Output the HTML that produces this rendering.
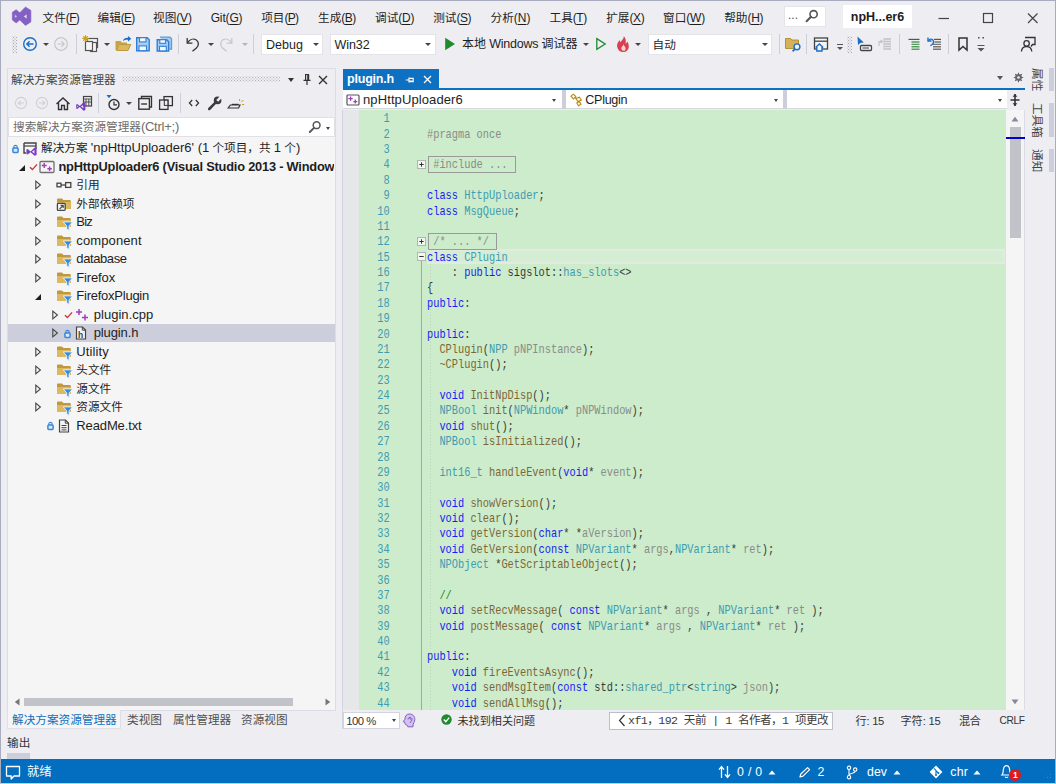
<!DOCTYPE html>
<html lang="zh-CN"><head>
<meta charset="utf-8">
<title>npHttpUploader6 - Microsoft Visual Studio</title>
<style>
*{box-sizing:border-box;margin:0;padding:0}
html,body{width:1056px;height:784px;overflow:hidden;background:#eeeef2}
body{position:relative;font-family:"Liberation Sans","Noto Sans CJK SC",sans-serif;font-size:11.64px;color:#1e1e1e}
.abs{position:absolute}
.l{font-size:13px;letter-spacing:0}
.lb{font-size:12.8px;letter-spacing:0}
.lc{font-size:12.5px}
.pt{line-height:18px;white-space:nowrap}
#frame{position:absolute;left:0;top:0;width:1056px;height:784px;border:1px solid #a9acbf;border-bottom:1.6px solid #c3cfe4;pointer-events:none;z-index:50}
#menu{position:absolute;left:0;top:0;width:1056px;height:32px}
#menu .mi{position:absolute;top:8.5px;height:17px;line-height:17px;color:#1e1e1e;white-space:nowrap}
#menu .mi u{text-decoration:underline;text-underline-offset:1.5px}
#tb{position:absolute;left:0;top:32px;width:1056px;height:26px}
.combo{position:absolute;background:#fff;border:1px solid #e3e3e8;height:21px;line-height:19px;padding-left:4px;color:#1e1e1e;white-space:nowrap}
.dd{position:absolute;width:0;height:0;border-style:solid;border-color:transparent;border-width:3px 3px 0 3px;border-top-color:#444}
.grip{background-image:radial-gradient(circle,#a8a8b6 0.65px,transparent 0.85px),radial-gradient(circle,#a8a8b6 0.65px,transparent 0.85px);background-size:3px 3px;background-position:0 0,1.5px 1.5px}
.grip2{background-image:radial-gradient(circle,#b4b4c0 0.65px,transparent 0.85px),radial-gradient(circle,#b4b4c0 0.65px,transparent 0.85px);background-size:3px 3px;background-position:0 0,1.5px 1.5px}
.sep{position:absolute;width:1px;background:#cccedb}
#se{position:absolute;left:7px;top:68px;width:329px;height:643px;background:#eeeef2;border:1px solid #dcdce7}
.row{position:absolute;height:18px;line-height:18px;white-space:nowrap;color:#1e1e1e}
.code{opacity:.88;font-family:"Liberation Mono","Noto Sans CJK SC",monospace;font-size:12.6px;line-height:15.38px;white-space:pre;color:#1e1e1e}
.cbox{border:1px solid #9a9a9a}
.guide{width:1px;background-image:linear-gradient(#bccdb9 45%,transparent 45%);background-size:1px 3px;opacity:.85}
.bt{line-height:18px;white-space:nowrap;color:#333}
.vt{width:19px;writing-mode:vertical-rl;text-orientation:sideways;line-height:19px;white-space:nowrap;color:#444;text-align:left}
#status{position:absolute;left:0;top:759.3px;width:1056px;height:23.5px;background:#036ec0;color:#fff}
.st{top:3.5px;line-height:18px;white-space:nowrap;color:#fff;font-size:12px}
.st .l,.st{font-size:12.3px}
.bt .l{font-size:11.2px}
.mi .l{font-size:12px}
</style>
</head>
<body>
<div id="menu">
<svg class="abs" style="left:11px;top:6px" width="21" height="21" viewBox="0 0 21 21"><path d="M1.3 6.3 L5.15 3.66 L8.8 6.7 L14.5 1 L19.9 4.4 V15.9 L14.5 19.4 L8.8 14 L5.15 16.9 L1.3 14 Z M3.8 8.6 L6.3 10.4 L3.8 12.1 Z M15.9 7.9 L12.6 10.4 L15.9 12.9 Z" fill="#8560c4" fill-rule="evenodd" stroke="#8560c4" stroke-width=".6" stroke-linejoin="round"></path></svg>
<div class="mi" style="left:42.5px"><span>文件<span class="l" style="letter-spacing: -0.636px;">(<u>F</u>)</span></span></div>
<div class="mi" style="left:97.5px"><span>编辑<span class="l" style="letter-spacing: -0.76px;">(<u>E</u>)</span></span></div>
<div class="mi" style="left:153px"><span>视图<span class="l" style="letter-spacing: -0.177px;">(<u>V</u>)</span></span></div>
<div class="mi" style="left:210.7px"><span><span class="l" style="letter-spacing: -0.156px;">Git(<u>G</u>)</span></span></div>
<div class="mi" style="left:261.2px"><span>项目<span class="l" style="letter-spacing: -0.76px;">(<u>P</u>)</span></span></div>
<div class="mi" style="left:318px"><span>生成<span class="l" style="letter-spacing: -0.51px;">(<u>B</u>)</span></span></div>
<div class="mi" style="left:375px"><span>调试<span class="l" style="letter-spacing: -0.229px;">(<u>D</u>)</span></span></div>
<div class="mi" style="left:433.2px"><span>测试<span class="l" style="letter-spacing: -0.427px;">(<u>S</u>)</span></span></div>
<div class="mi" style="left:490.5px"><span>分析<span class="l" style="letter-spacing: 0.021px;">(<u>N</u>)</span></span></div>
<div class="mi" style="left:549.5px"><span>工具<span class="l" style="letter-spacing: -0.453px;">(<u>T</u>)</span></span></div>
<div class="mi" style="left:606.2px"><span>扩展<span class="l" style="letter-spacing: -0.344px;">(<u>X</u>)</span></span></div>
<div class="mi" style="left:663px"><span>窗口<span class="l" style="letter-spacing: -0.198px;">(<u>W</u>)</span></span></div>
<div class="mi" style="left:724.2px"><span>帮助<span class="l" style="letter-spacing: -0.313px;">(<u>H</u>)</span></span></div>
<div class="abs" style="left:784px;top:6px;width:42px;height:21px;background:#fff;border:1px solid #e3e3e8"></div>
<div class="abs" style="left:788px;top:5px;font-size:12px;line-height:20px;color:#555">...</div>
<svg class="abs" style="left:805px;top:9px" width="14" height="14" viewBox="0 0 14 14"><circle cx="8.6" cy="5.2" r="3.6" fill="none" stroke="#555" stroke-width="1.6"></circle><path d="M6 7.8 L1.6 12.2" stroke="#555" stroke-width="2" stroke-linecap="round"></path></svg>
<div class="abs" style="left:843px;top:5px;width:69px;height:23px;background:#fff;text-align:center;line-height:24px;font-weight:bold;font-size:12.5px;color:#1e1e1e"><span style="letter-spacing: -0.022px;">npH...er6</span></div>
<svg class="abs" style="left:930px;top:4.5px" width="120" height="26" viewBox="0 0 120 26"><path d="M8.5 13.5 H19" stroke="#444" stroke-width="1.2"></path><rect x="53.5" y="8.5" width="9" height="9" fill="none" stroke="#444" stroke-width="1.2"></rect><path d="M98 8.5 L107.5 18 M107.5 8.5 L98 18" stroke="#444" stroke-width="1.2"></path></svg>
</div>
<div id="tb">
<div class="abs grip" style="left:12px;top:4px;width:5px;height:17px"></div>
<svg class="abs" style="left:21.5px;top:4px" width="16" height="16" viewBox="0 0 16 16"><circle cx="8" cy="8" r="6.3" fill="none" stroke="#1b6ec2" stroke-width="1.4"></circle><path d="M11.5 8 H5 M7.6 5.2 L4.8 8 L7.6 10.8" fill="none" stroke="#1b6ec2" stroke-width="1.4"></path></svg>
<div class="dd" style="left:42.7px;top:11px;border-top-color:#444"></div>
<svg class="abs" style="left:53px;top:4px" width="16" height="16" viewBox="0 0 16 16"><circle cx="8" cy="8" r="6.3" fill="none" stroke="#c6c6cc" stroke-width="1.2"></circle><path d="M4.5 8 H11 M8.4 5.2 L11.2 8 L8.4 10.8" fill="none" stroke="#c6c6cc" stroke-width="1.2"></path></svg>
<div class="sep" style="left:75.5px;top:2px;height:20px"></div>
<svg class="abs" style="left:82px;top:3px" width="18" height="18" viewBox="0 0 18 18"><rect x="5.5" y="3.5" width="10" height="9" fill="#f5f5f5" stroke="#555" stroke-width="1.2"></rect><rect x="8.5" y="7.5" width="6" height="9" fill="#f5f5f5" stroke="#555" stroke-width="1.2"></rect><rect x="3.5" y="6.5" width="7" height="9" fill="#f5f5f5" stroke="#555" stroke-width="1.2"></rect><circle cx="3.5" cy="3.5" r="2.4" fill="#e8b830"></circle><path d="M3.5 0 V7 M0 3.5 H7 M1 1 L6 6 M6 1 L1 6" stroke="#c99a1a" stroke-width=".8"></path></svg>
<div class="dd" style="left:104px;top:11px;border-top-color:#444"></div>
<svg class="abs" style="left:113.5px;top:3px" width="18" height="18" viewBox="0 0 18 18"><path d="M1.5 6 H6.5 L8 7.5 H13 V9 H5 L2.5 15 H1.5 Z" fill="#c9a342"></path><path d="M2.5 15.5 L5.3 9.5 H16.8 L14 15.5 Z" fill="#dcb85a" stroke="#b08b2b" stroke-width=".8"></path><path d="M9 6.2 C9.5 3.5 11.5 2.6 14 2.8 V1 L17.3 3.8 L14 6.6 V4.8 C12 4.6 10.4 5 9 6.2Z" fill="#1b6ec2"></path></svg>
<svg class="abs" style="left:134px;top:3px" width="18" height="18" viewBox="0 0 18 18"><path d="M2.7 2.7 h10.5 l2 2 v11 h-12.5 z" fill="#a9cdf2" stroke="#2f7fd6" stroke-width="1.4"></path><rect x="5.5" y="2.7" width="6.5" height="4.2" fill="#f4f9ff" stroke="#2f7fd6" stroke-width="1.1"></rect><rect x="5" y="10.9" width="7.5" height="4.8" fill="#f4f9ff" stroke="#2f7fd6" stroke-width="1.1"></rect></svg>
<svg class="abs" style="left:155px;top:3px" width="18" height="18" viewBox="0 0 18 18"><path d="M5 2.2 h10 l1.5 1.5 v10.5 h-2" fill="#a9cdf2" stroke="#5b9bd8" stroke-width="1.3"></path><path d="M2.2 4.7 h9.5 l2 2 v9.3 h-11.5 z" fill="#a9cdf2" stroke="#2f7fd6" stroke-width="1.4"></path><rect x="4.8" y="4.7" width="5.8" height="3.6" fill="#f4f9ff" stroke="#2f7fd6" stroke-width="1.1"></rect><rect x="4.5" y="11.3" width="6.8" height="4.6" fill="#f4f9ff" stroke="#2f7fd6" stroke-width="1.1"></rect></svg>
<div class="sep" style="left:178px;top:2px;height:20px"></div>
<svg class="abs" style="left:183.5px;top:3px" width="18" height="18" viewBox="0 0 18 18"><path d="M3.2 3 V8.2 H8.4" fill="none" stroke="#333" stroke-width="1.3"></path><path d="M3.6 7.8 C5.5 4.6 9 3.2 12 4.8 C15.2 6.6 15 10.8 12.4 13 L8.5 16.2" fill="none" stroke="#333" stroke-width="1.3"></path></svg>
<div class="dd" style="left:208px;top:11px;border-top-color:#444"></div>
<svg class="abs" style="left:217px;top:3px" width="18" height="18" viewBox="0 0 18 18"><path d="M14.8 3 V8.2 H9.6" fill="none" stroke="#c6c6cc" stroke-width="1.3"></path><path d="M14.4 7.8 C12.5 4.6 9 3.2 6 4.8 C2.8 6.6 3 10.8 5.6 13 L9.5 16.2" fill="none" stroke="#c6c6cc" stroke-width="1.3"></path></svg>
<div class="dd" style="left:241.5px;top:11px;border-top-color:#b4b4bc"></div>
<div class="sep" style="left:253px;top:2px;height:20px"></div>
<div class="combo" style="left:261px;top:2px;width:62px"><span><span class="lc" style="letter-spacing: 0.031px;">Debug</span></span></div>
<div class="dd" style="left:313px;top:11px;border-top-color:#444"></div>
<div class="combo" style="left:329.5px;top:2px;width:106px"><span><span class="lc" style="letter-spacing: -0.087px;">Win32</span></span></div>
<div class="dd" style="left:425px;top:11px;border-top-color:#444"></div>
<svg class="abs" style="left:444px;top:5px" width="12" height="14" viewBox="0 0 12 14"><path d="M1.2 0.8 L11 7 L1.2 13.2 Z" fill="#1f8a2e"></path></svg>
<div class="abs" style="left:462px;top:2px;line-height:20px;font-size:12px;white-space:nowrap"><span>本地 <span class="lc" style="letter-spacing: -0.272px;">Windows</span> 调试器</span></div>
<div class="dd" style="left:582.5px;top:11px;border-top-color:#444"></div>
<svg class="abs" style="left:594.5px;top:5px" width="12" height="14" viewBox="0 0 12 14"><path d="M1.8 1.6 L10.2 7 L1.8 12.4 Z" fill="none" stroke="#1f8a2e" stroke-width="1.3"></path></svg>
<svg class="abs" style="left:615px;top:3px" width="16" height="18" viewBox="0 0 16 18"><path d="M8.6 1 C9.4 3.4 6.6 5 5.6 7.2 C5 6.6 4.8 5.8 5 5 C2.8 6.8 1.6 9.4 2.2 12 C2.8 15 5.2 17 8 17 C11.2 17 13.8 14.6 13.8 11.4 C13.8 9.4 13 7.8 12.6 6.4 C12 7.6 11.4 8 10.6 8.4 C11.2 5.6 10.6 2.6 8.6 1 Z" fill="#d9414e"></path><path d="M8.2 9 C8.8 10.6 6.2 11.6 6.4 13.6 C6.5 15 7.4 15.8 8.4 15.8 C9.8 15.8 10.8 14.8 10.6 13.2 C10.4 11.8 9 10.6 8.2 9 Z" fill="#f7d6d8"></path></svg>
<div class="dd" style="left:635px;top:11px;border-top-color:#444"></div>
<div class="combo" style="left:647.5px;top:2px;width:124px">自动</div>
<div class="dd" style="left:761.8px;top:11px;border-top-color:#444"></div>
<div class="sep" style="left:779px;top:2px;height:20px"></div>
<svg class="abs" style="left:784px;top:3px" width="18" height="18" viewBox="0 0 18 18"><path d="M1.5 3.5 H6.5 L8 5 H14.5 V13.5 H1.5 Z" fill="#d5b15a" stroke="#b08b2b" stroke-width=".9"></path><circle cx="13" cy="11.8" r="2.9" fill="#eef4fb" stroke="#1b6ec2" stroke-width="1.4"></circle><path d="M11 13.8 L8.6 16.4" stroke="#1b6ec2" stroke-width="1.7"></path></svg>
<div class="sep" style="left:806px;top:2px;height:20px"></div>
<svg class="abs" style="left:812px;top:3px" width="18" height="18" viewBox="0 0 18 18"><rect x="2.5" y="3" width="13" height="11" fill="#f5f5f5" stroke="#444" stroke-width="1.3"></rect><path d="M2.5 6.2 H15.5" stroke="#444" stroke-width="1.3"></path><path d="M3.6 12.4 L7.4 9 L11.2 12.4 M4.8 12 V16 H10 V12" fill="#f5f5f5" stroke="#1b6ec2" stroke-width="1.4"></path></svg>
<svg class="abs" style="left:836px;top:11px" width="8" height="8" viewBox="0 0 8 8"><path d="M1 1.5 H7" stroke="#555" stroke-width="1"></path><path d="M1 4 H7 L4 7 Z" fill="#555"></path></svg>
<div class="abs grip" style="left:846.5px;top:4px;width:5px;height:17px"></div>
<svg class="abs" style="left:854.7px;top:3px" width="18" height="18" viewBox="0 0 18 18"><path d="M2.5 1.5 L3 10 L5.4 8 L8.8 7.6 Z" fill="#1b6ec2"></path><rect x="5.5" y="10.5" width="11" height="5" rx="1" fill="#f5f5f5" stroke="#444" stroke-width="1.3"></rect><path d="M7.5 13 H14" stroke="#444" stroke-width="1"></path></svg>
<svg class="abs" style="left:877px;top:4px" width="16" height="16" viewBox="0 0 16 16"><path d="M2 10 V5.5 H5 M3.5 3.8 L5.4 5.5 L3.5 7.2" fill="none" stroke="#c0c0c8" stroke-width="1.1"></path><path d="M7.5 3 H14 M7.5 5.5 H14 M7.5 8 H14 M7.5 10.5 H14 M7.5 13 H14" stroke="#c0c0c8" stroke-width="1.3"></path><path d="M7 2 V14" stroke="#c0c0c8"></path></svg>
<div class="sep" style="left:899px;top:2px;height:20px"></div>
<svg class="abs" style="left:905.6px;top:4px" width="16" height="16" viewBox="0 0 16 16"><path d="M2.5 3.4 H13.5" stroke="#555" stroke-width="1.2"></path><path d="M5.5 6 H13.5 M5.5 8.4 H13.5 M5.5 10.8 H13.5 M5.5 13.2 H13.5" stroke="#5b9d63" stroke-width="1.4"></path></svg>
<svg class="abs" style="left:924.8px;top:4px" width="18" height="16" viewBox="0 0 18 16"><path d="M9 3.4 H16" stroke="#555" stroke-width="1.2"></path><path d="M9.5 6 H16 M8 8.4 H16 M8 10.8 H16 M8 13.2 H16" stroke="#777" stroke-width="1.4"></path><path d="M3 1.5 V5 H6.5" fill="none" stroke="#1b6ec2" stroke-width="1.4"></path><path d="M3.4 4.8 C4.5 2.6 7.6 2.6 8.4 5 C9 7 7.4 8.6 5.4 9.6" fill="none" stroke="#1b6ec2" stroke-width="1.4"></path></svg>
<div class="sep" style="left:948px;top:2px;height:20px"></div>
<svg class="abs" style="left:956px;top:4px" width="14" height="16" viewBox="0 0 14 16"><path d="M3 2 H11 V14 L7 10.4 L3 14 Z" fill="none" stroke="#333" stroke-width="1.5"></path></svg>
<svg class="abs" style="left:976.4px;top:3px" width="10" height="18" viewBox="0 0 10 18"><path d="M2 2 h1.6 v1.6 h-1.6z M6.4 2 h1.6 v1.6 h-1.6z" fill="#555"></path><path d="M1.5 10.5 H8.5" stroke="#555" stroke-width="1"></path><path d="M1.5 13 H8.5 L5 16.5 Z" fill="#555"></path></svg>
<svg class="abs" style="left:1018.6px;top:3px" width="18" height="18" viewBox="0 0 18 18"><path d="M6 2.5 H16 V9.5 H13.5 L12 11.5" fill="none" stroke="#333" stroke-width="1.3"></path><circle cx="7.6" cy="8.4" r="2.7" fill="#eeeef2" stroke="#333" stroke-width="1.3"></circle><path d="M2.4 16.5 C2.8 12.6 5 11.6 7.6 11.6 C10.2 11.6 12.4 12.6 12.8 16.5" fill="none" stroke="#333" stroke-width="1.3"></path></svg>
</div>
<div id="se"></div>
<div id="sec">
<div class="abs" style="left:8px;top:137px;width:327px;height:573px;background:#f5f5f5"></div>
<div class="abs pt" style="left:11px;top:71px;color:#444">解决方案资源管理器</div>
<div class="abs grip2" style="left:122px;top:76.3px;width:157.5px;height:6px"></div>
<div class="dd" style="left:288px;top:78px;border-left-width:3.5px;border-right-width:3.5px;border-top-width:4px;border-top-color:#333"></div>
<svg class="abs" style="left:302px;top:73px" width="10" height="13" viewBox="0 0 10 13"><path d="M3 1.5 H7 M3.6 1.5 V7 M6.6 1.5 V7 M5.8 1.5 V7 M1.5 7.3 H8.5 M5 7.5 V12" fill="none" stroke="#333" stroke-width="1.2"></path></svg>
<svg class="abs" style="left:318px;top:74.5px" width="10" height="10" viewBox="0 0 10 10"><path d="M1 1 L9 9 M9 1 L1 9" stroke="#333" stroke-width="1.4"></path></svg>
<svg class="abs" style="left:14px;top:96px" width="14" height="14" viewBox="0 0 14 14"><circle cx="7" cy="7" r="5.6" fill="none" stroke="#cfcfd6" stroke-width="1.1"></circle><path d="M10 7 H4.4 M6.6 4.8 L4.2 7 L6.6 9.2" fill="none" stroke="#cfcfd6" stroke-width="1.1"></path></svg>
<svg class="abs" style="left:35px;top:96px" width="14" height="14" viewBox="0 0 14 14"><circle cx="7" cy="7" r="5.6" fill="none" stroke="#cfcfd6" stroke-width="1.1"></circle><path d="M4 7 H9.6 M7.4 4.8 L9.8 7 L7.4 9.2" fill="none" stroke="#cfcfd6" stroke-width="1.1"></path></svg>
<svg class="abs" style="left:55px;top:95.5px" width="16" height="15" viewBox="0 0 16 15"><path d="M1.5 8 L8 2 L14.5 8 M3.5 6.8 V13.5 H6.6 V9.5 H9.4 V13.5 H12.5 V6.8" fill="none" stroke="#333" stroke-width="1.4"></path></svg>
<svg class="abs" style="left:75px;top:94.5px" width="18" height="17" viewBox="0 0 18 17"><rect x="8.5" y="1.5" width="8" height="9.5" fill="#eeeef2" stroke="#444" stroke-width="1.2"></rect><path d="M8.5 4 H16.5 M11 4 V11 M13.8 4 V11 M8.5 7 H16.5" stroke="#444" stroke-width=".9"></path><path d="M1.2 9.6 L2.2 9 L4.8 11 L8.6 7.2 L10.4 8 V15 L8.6 15.8 L4.8 12 L2.2 14 L1.2 13.4 Z M8.4 9.8 L6 11.5 L8.4 13.2Z M2.3 10.6 V12.4 L3.3 11.5Z" fill="#7a3fc0" fill-rule="evenodd"></path></svg>
<div class="sep" style="left:98px;top:93px;height:20px"></div>
<svg class="abs" style="left:105px;top:94px" width="16" height="18" viewBox="0 0 16 18"><path d="M1.5 1 H6.5 L4 4.2 Z" fill="#1b6ec2"></path><circle cx="9" cy="10.5" r="5" fill="none" stroke="#333" stroke-width="1.4"></circle><path d="M9 7.5 V10.8 H12" fill="none" stroke="#333" stroke-width="1.2"></path></svg>
<div class="dd" style="left:126px;top:102px"></div>
<svg class="abs" style="left:137px;top:95px" width="16" height="16" viewBox="0 0 16 16"><path d="M4.5 3 V1.5 H14.5 V12 H13" fill="none" stroke="#333" stroke-width="1.3"></path><rect x="1.8" y="3.6" width="10.6" height="10.6" fill="#eeeef2" stroke="#333" stroke-width="1.4"></rect><path d="M4.2 9 H10" stroke="#333" stroke-width="1.4"></path></svg>
<svg class="abs" style="left:158px;top:95px" width="16" height="16" viewBox="0 0 16 16"><rect x="6" y="1.6" width="8.4" height="9" fill="#eeeef2" stroke="#333" stroke-width="1.3"></rect><rect x="1.6" y="5" width="8.4" height="9.4" fill="#eeeef2" stroke="#333" stroke-width="1.3"></rect><rect x="6.3" y="5.2" width="3.6" height="5.2" fill="#eeeef2" stroke="#333" stroke-width="1"></rect></svg>
<div class="sep" style="left:180px;top:93px;height:20px"></div>
<svg class="abs" style="left:188px;top:98px" width="12" height="10" viewBox="0 0 12 10"><path d="M4.2 2 L1.4 5 L4.2 8 M7.8 2 L10.6 5 L7.8 8" fill="none" stroke="#333" stroke-width="1.2"></path></svg>
<svg class="abs" style="left:207px;top:95px" width="16" height="16" viewBox="0 0 16 16"><path d="M2.2 14 L9 7.2" stroke="#3b3b3b" stroke-width="2.5" stroke-linecap="round"></path><circle cx="10.6" cy="5.4" r="3.8" fill="#3b3b3b"></circle><path d="M10.2 5.8 L14.6 1.4" stroke="#eeeef2" stroke-width="2.6"></path></svg>
<svg class="abs" style="left:227px;top:98px" width="18" height="12" viewBox="0 0 18 12"><path d="M1.2 10 H11.6 L13 7 H3.4 Z" fill="#eeeef2" stroke="#333" stroke-width="1.2"></path><path d="M4.8 6.4 H11.6" stroke="#333" stroke-width="1.2"></path><path d="M14.4 4 L16.4 2 M15 6.6 H17.2 M12.6 3 V1" stroke="#c99a1a" stroke-width="1"></path></svg>
<div class="abs" style="left:8px;top:117.2px;width:327px;height:19.8px;background:#fff;border:1px solid #e0e0e6"></div>
<div class="abs pt" style="left:13px;top:118px;color:#6d6d6d"><span>搜索解决方案资源管理器<span class="l" style="letter-spacing: -0.248px;">(Ctrl+;)</span></span></div>
<svg class="abs" style="left:308px;top:120px" width="14" height="14" viewBox="0 0 14 14"><circle cx="8.6" cy="5.2" r="3.4" fill="none" stroke="#555" stroke-width="1.5"></circle><path d="M6 7.8 L1.8 12" stroke="#555" stroke-width="1.9" stroke-linecap="round"></path></svg>
<div class="dd" style="left:325.5px;top:127px;border-width:3px 2.5px 0 2.5px"></div>
<div class="abs" style="left:8px;top:324px;width:327px;height:18px;background:#cccedb"></div>
<svg class="abs" style="left:10.5px;top:142.5px" width="9" height="11" viewBox="0 0 9 11"><path d="M2.9 5 V3.6 C2.9 2 6.1 2 6.1 3.6 V5" fill="none" stroke="#3a86d6" stroke-width="1.1"></path><rect x="1.9" y="5" width="5.2" height="4.4" rx=".8" fill="#d9e9fa" stroke="#3a86d6" stroke-width="1.5"></rect></svg>
<svg class="abs" style="left:21.5px;top:140.5px" width="16" height="15" viewBox="0 0 16 15"><path d="M2 2 H14 V8" fill="none" stroke="#444" stroke-width="1.4"></path><path d="M2 5 H14" stroke="#444" stroke-width="1.2"></path><path d="M2 2 V12 H4" fill="none" stroke="#444" stroke-width="1.4"></path><path d="M4.4 8.6 L5.6 8 L8.6 10.4 L12.6 6.4 L14.6 7.2 V14 L12.6 14.8 L8.6 11.2 L5.6 13.6 L4.4 13 Z M12.4 9 L10 10.8 L12.4 12.6Z" fill="#7a3fc0" fill-rule="evenodd"></path></svg>
<div class="row" style="left:41px;top:139.4px;"><span>解决方案 <span class="l" style="letter-spacing: 0.005px;">'npHttpUploader6' (1</span> 个项目，共 <span class="l" style="letter-spacing: 0.005px;">1</span> 个<span class="l" style="letter-spacing: 0.005px;">)</span></span></div>
<svg class="abs" style="left:17.5px;top:163.5px" width="8" height="8" viewBox="0 0 8 8"><path d="M7 1 V7 H1 Z" fill="#1e1e1e"></path></svg>
<svg class="abs" style="left:28.5px;top:162.5px" width="9" height="8" viewBox="0 0 9 8"><path d="M1 4.2 L3.4 6.6 L8 1.4" fill="none" stroke="#d13438" stroke-width="1.4"></path></svg>
<svg class="abs" style="left:38.7px;top:159.5px" width="16" height="14" viewBox="0 0 16 14"><rect x="1" y="1.5" width="14" height="11" rx="1" fill="#f5f5f5" stroke="#707070" stroke-width="1.3"></rect><path d="M5.2 3 V8 M2.7 5.5 H7.7 M10.6 6.5 V11 M8.4 8.8 H12.8" stroke="#a33bbf" stroke-width="1.4"></path></svg>
<div class="row" style="left:58.5px;top:157.9px;font-weight:bold;width:275.5px;overflow:hidden"><span><span class="lb" style="letter-spacing: -0.204px;">npHttpUploader6 (Visual Studio 2013 - Window</span></span><span class="lb">s XP)</span></div>
<svg class="abs" style="left:33.7px;top:180px" width="8" height="10" viewBox="0 0 8 10"><path d="M1.8 1.2 L6.4 5 L1.8 8.8 Z" fill="none" stroke="#444" stroke-width="1.1"></path></svg>
<svg class="abs" style="left:55.5px;top:181px" width="16" height="8" viewBox="0 0 16 8"><rect x="1" y="2.2" width="4" height="3.6" fill="none" stroke="#444" stroke-width="1.3"></rect><path d="M5 4 H9.5" stroke="#444" stroke-width="1.3"></path><rect x="9.6" y="1.6" width="5.2" height="4.8" fill="none" stroke="#444" stroke-width="1.3"></rect></svg>
<div class="row" style="left:76.3px;top:176.4px;">引用</div>
<svg class="abs" style="left:33.7px;top:198.5px" width="8" height="10" viewBox="0 0 8 10"><path d="M1.8 1.2 L6.4 5 L1.8 8.8 Z" fill="none" stroke="#444" stroke-width="1.1"></path></svg>
<svg class="abs" style="left:54.5px;top:195px" width="18" height="18" viewBox="0 0 18 18"><path d="M2 4.4 Q2 3.5 2.9 3.5 H7 L8.4 5.1 H14.9 Q15.8 5.1 15.8 6 V13.2 Q15.8 14.1 14.9 14.1 H2.9 Q2 14.1 2 13.2 Z" fill="#bf9840"></path><path d="M2 7 H15.8 V13.2 Q15.8 14.1 14.9 14.1 H2.9 Q2 14.1 2 13.2 Z" fill="#dcb95f"></path><rect x="2.4" y="8.4" width="7.8" height="7" rx=".8" fill="#f5f5f5" stroke="#4a4a4a" stroke-width="1.3"></rect><path d="M4.6 14 L8 10.6 M5.6 10.4 H8.2 V13" fill="none" stroke="#4a4a4a" stroke-width="1.1"></path></svg>
<div class="row" style="left:76.3px;top:194.9px;">外部依赖项</div>
<svg class="abs" style="left:33.7px;top:217px" width="8" height="10" viewBox="0 0 8 10"><path d="M1.8 1.2 L6.4 5 L1.8 8.8 Z" fill="none" stroke="#444" stroke-width="1.1"></path></svg>
<svg class="abs" style="left:54.5px;top:213px" width="18" height="18" viewBox="0 0 18 18"><path d="M2 4.4 Q2 3.5 2.9 3.5 H7 L8.4 5.1 H14.9 Q15.8 5.1 15.8 6 V13.2 Q15.8 14.1 14.9 14.1 H2.9 Q2 14.1 2 13.2 Z" fill="#bf9840"></path><path d="M2 7 H15.8 V13.2 Q15.8 14.1 14.9 14.1 H2.9 Q2 14.1 2 13.2 Z" fill="#dcb95f"></path><path d="M8.3 8.9 H17.5 L14.1 12.9 V17.4 L11.7 15.7 V12.9 Z" fill="#2f8ae0" stroke="#f5f5f5" stroke-width=".9" stroke-linejoin="round"></path></svg>
<div class="row" style="left:76.3px;top:213.4px;"><span><span class="l" style="letter-spacing: -0.788px;">Biz</span></span></div>
<svg class="abs" style="left:33.7px;top:235.5px" width="8" height="10" viewBox="0 0 8 10"><path d="M1.8 1.2 L6.4 5 L1.8 8.8 Z" fill="none" stroke="#444" stroke-width="1.1"></path></svg>
<svg class="abs" style="left:54.5px;top:231.5px" width="18" height="18" viewBox="0 0 18 18"><path d="M2 4.4 Q2 3.5 2.9 3.5 H7 L8.4 5.1 H14.9 Q15.8 5.1 15.8 6 V13.2 Q15.8 14.1 14.9 14.1 H2.9 Q2 14.1 2 13.2 Z" fill="#bf9840"></path><path d="M2 7 H15.8 V13.2 Q15.8 14.1 14.9 14.1 H2.9 Q2 14.1 2 13.2 Z" fill="#dcb95f"></path><path d="M8.3 8.9 H17.5 L14.1 12.9 V17.4 L11.7 15.7 V12.9 Z" fill="#2f8ae0" stroke="#f5f5f5" stroke-width=".9" stroke-linejoin="round"></path></svg>
<div class="row" style="left:76.3px;top:231.9px;"><span><span class="l" style="letter-spacing: 0.119px;">component</span></span></div>
<svg class="abs" style="left:33.7px;top:254px" width="8" height="10" viewBox="0 0 8 10"><path d="M1.8 1.2 L6.4 5 L1.8 8.8 Z" fill="none" stroke="#444" stroke-width="1.1"></path></svg>
<svg class="abs" style="left:54.5px;top:250px" width="18" height="18" viewBox="0 0 18 18"><path d="M2 4.4 Q2 3.5 2.9 3.5 H7 L8.4 5.1 H14.9 Q15.8 5.1 15.8 6 V13.2 Q15.8 14.1 14.9 14.1 H2.9 Q2 14.1 2 13.2 Z" fill="#bf9840"></path><path d="M2 7 H15.8 V13.2 Q15.8 14.1 14.9 14.1 H2.9 Q2 14.1 2 13.2 Z" fill="#dcb95f"></path><path d="M8.3 8.9 H17.5 L14.1 12.9 V17.4 L11.7 15.7 V12.9 Z" fill="#2f8ae0" stroke="#f5f5f5" stroke-width=".9" stroke-linejoin="round"></path></svg>
<div class="row" style="left:76.3px;top:250.4px;"><span><span class="l" style="letter-spacing: -0.4px;">database</span></span></div>
<svg class="abs" style="left:33.7px;top:272.5px" width="8" height="10" viewBox="0 0 8 10"><path d="M1.8 1.2 L6.4 5 L1.8 8.8 Z" fill="none" stroke="#444" stroke-width="1.1"></path></svg>
<svg class="abs" style="left:54.5px;top:268.5px" width="18" height="18" viewBox="0 0 18 18"><path d="M2 4.4 Q2 3.5 2.9 3.5 H7 L8.4 5.1 H14.9 Q15.8 5.1 15.8 6 V13.2 Q15.8 14.1 14.9 14.1 H2.9 Q2 14.1 2 13.2 Z" fill="#bf9840"></path><path d="M2 7 H15.8 V13.2 Q15.8 14.1 14.9 14.1 H2.9 Q2 14.1 2 13.2 Z" fill="#dcb95f"></path><path d="M8.3 8.9 H17.5 L14.1 12.9 V17.4 L11.7 15.7 V12.9 Z" fill="#2f8ae0" stroke="#f5f5f5" stroke-width=".9" stroke-linejoin="round"></path></svg>
<div class="row" style="left:76.3px;top:268.9px;"><span><span class="l" style="letter-spacing: -0.148px;">Firefox</span></span></div>
<svg class="abs" style="left:33.5px;top:293px" width="8" height="8" viewBox="0 0 8 8"><path d="M7 1 V7 H1 Z" fill="#1e1e1e"></path></svg>
<svg class="abs" style="left:54.5px;top:287px" width="18" height="18" viewBox="0 0 18 18"><path d="M2 4.4 Q2 3.5 2.9 3.5 H7 L8.4 5.1 H14.9 Q15.8 5.1 15.8 6 V13.2 Q15.8 14.1 14.9 14.1 H2.9 Q2 14.1 2 13.2 Z" fill="#bf9840"></path><path d="M2 7 H15.8 V13.2 Q15.8 14.1 14.9 14.1 H2.9 Q2 14.1 2 13.2 Z" fill="#dcb95f"></path><path d="M8.3 8.9 H17.5 L14.1 12.9 V17.4 L11.7 15.7 V12.9 Z" fill="#2f8ae0" stroke="#f5f5f5" stroke-width=".9" stroke-linejoin="round"></path></svg>
<div class="row" style="left:76.3px;top:287.4px;"><span><span class="l" style="letter-spacing: -0.244px;">FirefoxPlugin</span></span></div>
<svg class="abs" style="left:51px;top:309.5px" width="8" height="10" viewBox="0 0 8 10"><path d="M1.8 1.2 L6.4 5 L1.8 8.8 Z" fill="none" stroke="#444" stroke-width="1.1"></path></svg>
<svg class="abs" style="left:63.5px;top:310.5px" width="9" height="8" viewBox="0 0 9 8"><path d="M1 4.2 L3.4 6.6 L8 1.4" fill="none" stroke="#d13438" stroke-width="1.4"></path></svg>
<svg class="abs" style="left:75px;top:307.5px" width="14" height="14" viewBox="0 0 14 14"><path d="M4 1 V7 M1 4 H7" stroke="#a33bbf" stroke-width="1.5"></path><path d="M10 6.5 V12.5 M7 9.5 H13" stroke="#a33bbf" stroke-width="1.5"></path></svg>
<div class="row" style="left:93.7px;top:305.9px;"><span><span class="l" style="letter-spacing: 0.042px;">plugin.cpp</span></span></div>
<svg class="abs" style="left:51px;top:328px" width="8" height="10" viewBox="0 0 8 10"><path d="M1.8 1.2 L6.4 5 L1.8 8.8 Z" fill="none" stroke="#444" stroke-width="1.1"></path></svg>
<svg class="abs" style="left:63.2px;top:327.5px" width="9" height="11" viewBox="0 0 9 11"><path d="M2.9 5 V3.6 C2.9 2 6.1 2 6.1 3.6 V5" fill="none" stroke="#3a86d6" stroke-width="1.1"></path><rect x="1.9" y="5" width="5.2" height="4.4" rx=".8" fill="#d9e9fa" stroke="#3a86d6" stroke-width="1.5"></rect></svg>
<svg class="abs" style="left:75px;top:326px" width="12" height="14" viewBox="0 0 12 14"><path d="M1.5 1 H7.5 L10.5 4 V13 H1.5 Z" fill="#f5f5f5" stroke="#444" stroke-width="1.2"></path><path d="M7.3 1 V4.2 H10.5" fill="none" stroke="#444" stroke-width="1"></path><text x="3" y="11.6" font-family="Liberation Sans, sans-serif" font-size="8.5" font-weight="bold" fill="#444">h</text></svg>
<div class="row" style="left:93.7px;top:324.4px;"><span><span class="l" style="letter-spacing: -0.106px;">plugin.h</span></span></div>
<svg class="abs" style="left:33.7px;top:346.5px" width="8" height="10" viewBox="0 0 8 10"><path d="M1.8 1.2 L6.4 5 L1.8 8.8 Z" fill="none" stroke="#444" stroke-width="1.1"></path></svg>
<svg class="abs" style="left:54.5px;top:342.5px" width="18" height="18" viewBox="0 0 18 18"><path d="M2 4.4 Q2 3.5 2.9 3.5 H7 L8.4 5.1 H14.9 Q15.8 5.1 15.8 6 V13.2 Q15.8 14.1 14.9 14.1 H2.9 Q2 14.1 2 13.2 Z" fill="#bf9840"></path><path d="M2 7 H15.8 V13.2 Q15.8 14.1 14.9 14.1 H2.9 Q2 14.1 2 13.2 Z" fill="#dcb95f"></path><path d="M8.3 8.9 H17.5 L14.1 12.9 V17.4 L11.7 15.7 V12.9 Z" fill="#2f8ae0" stroke="#f5f5f5" stroke-width=".9" stroke-linejoin="round"></path></svg>
<div class="row" style="left:76.3px;top:342.9px;"><span><span class="l" style="letter-spacing: 0.131px;">Utility</span></span></div>
<svg class="abs" style="left:33.7px;top:365px" width="8" height="10" viewBox="0 0 8 10"><path d="M1.8 1.2 L6.4 5 L1.8 8.8 Z" fill="none" stroke="#444" stroke-width="1.1"></path></svg>
<svg class="abs" style="left:54.5px;top:361px" width="18" height="18" viewBox="0 0 18 18"><path d="M2 4.4 Q2 3.5 2.9 3.5 H7 L8.4 5.1 H14.9 Q15.8 5.1 15.8 6 V13.2 Q15.8 14.1 14.9 14.1 H2.9 Q2 14.1 2 13.2 Z" fill="#bf9840"></path><path d="M2 7 H15.8 V13.2 Q15.8 14.1 14.9 14.1 H2.9 Q2 14.1 2 13.2 Z" fill="#dcb95f"></path><path d="M8.3 8.9 H17.5 L14.1 12.9 V17.4 L11.7 15.7 V12.9 Z" fill="#2f8ae0" stroke="#f5f5f5" stroke-width=".9" stroke-linejoin="round"></path></svg>
<div class="row" style="left:76.3px;top:361.4px;">头文件</div>
<svg class="abs" style="left:33.7px;top:383.5px" width="8" height="10" viewBox="0 0 8 10"><path d="M1.8 1.2 L6.4 5 L1.8 8.8 Z" fill="none" stroke="#444" stroke-width="1.1"></path></svg>
<svg class="abs" style="left:54.5px;top:379.5px" width="18" height="18" viewBox="0 0 18 18"><path d="M2 4.4 Q2 3.5 2.9 3.5 H7 L8.4 5.1 H14.9 Q15.8 5.1 15.8 6 V13.2 Q15.8 14.1 14.9 14.1 H2.9 Q2 14.1 2 13.2 Z" fill="#bf9840"></path><path d="M2 7 H15.8 V13.2 Q15.8 14.1 14.9 14.1 H2.9 Q2 14.1 2 13.2 Z" fill="#dcb95f"></path><path d="M8.3 8.9 H17.5 L14.1 12.9 V17.4 L11.7 15.7 V12.9 Z" fill="#2f8ae0" stroke="#f5f5f5" stroke-width=".9" stroke-linejoin="round"></path></svg>
<div class="row" style="left:76.3px;top:379.9px;">源文件</div>
<svg class="abs" style="left:33.7px;top:402px" width="8" height="10" viewBox="0 0 8 10"><path d="M1.8 1.2 L6.4 5 L1.8 8.8 Z" fill="none" stroke="#444" stroke-width="1.1"></path></svg>
<svg class="abs" style="left:54.5px;top:398px" width="18" height="18" viewBox="0 0 18 18"><path d="M2 4.4 Q2 3.5 2.9 3.5 H7 L8.4 5.1 H14.9 Q15.8 5.1 15.8 6 V13.2 Q15.8 14.1 14.9 14.1 H2.9 Q2 14.1 2 13.2 Z" fill="#bf9840"></path><path d="M2 7 H15.8 V13.2 Q15.8 14.1 14.9 14.1 H2.9 Q2 14.1 2 13.2 Z" fill="#dcb95f"></path><path d="M8.3 8.9 H17.5 L14.1 12.9 V17.4 L11.7 15.7 V12.9 Z" fill="#2f8ae0" stroke="#f5f5f5" stroke-width=".9" stroke-linejoin="round"></path></svg>
<div class="row" style="left:76.3px;top:398.4px;">资源文件</div>
<svg class="abs" style="left:45.5px;top:420px" width="9" height="11" viewBox="0 0 9 11"><path d="M2.9 5 V3.6 C2.9 2 6.1 2 6.1 3.6 V5" fill="none" stroke="#3a86d6" stroke-width="1.1"></path><rect x="1.9" y="5" width="5.2" height="4.4" rx=".8" fill="#d9e9fa" stroke="#3a86d6" stroke-width="1.5"></rect></svg>
<svg class="abs" style="left:57.5px;top:418.5px" width="12" height="14" viewBox="0 0 12 14"><path d="M1.5 1 H7.5 L10.5 4 V13 H1.5 Z" fill="#f5f5f5" stroke="#444" stroke-width="1.2"></path><path d="M7.3 1 V4.2 H10.5" fill="none" stroke="#444" stroke-width="1"></path><path d="M3.5 6.5 H8.5 M3.5 8.7 H8.5 M3.5 10.9 H8.5" stroke="#444" stroke-width="1"></path></svg>
<div class="row" style="left:76.3px;top:416.9px;"><span><span class="l" style="letter-spacing: -0.118px;">ReadMe.txt</span></span></div>
<svg class="abs" style="left:14px;top:698px" width="6" height="8" viewBox="0 0 6 8"><path d="M5.5 0.5 V7.5 L0.8 4 Z" fill="#777"></path></svg>
<div class="abs" style="left:24px;top:697.6px;width:269.2px;height:8.4px;background:#c2c3c9"></div>
<svg class="abs" style="left:325px;top:698px" width="6" height="8" viewBox="0 0 6 8"><path d="M0.5 0.5 V7.5 L5.2 4 Z" fill="#777"></path></svg>
<div class="abs" style="left:7px;top:710px;width:114px;height:19px;background:#f5f5f5;border:1px solid #dfdfe6;border-top:none"></div>
<div class="abs pt" style="left:12px;top:711px;color:#0e70c0">解决方案资源管理器</div>
<div class="abs pt" style="left:127px;top:711px;color:#505050">类视图</div>
<div class="abs pt" style="left:173px;top:711px;color:#505050">属性管理器</div>
<div class="abs pt" style="left:241px;top:711px;color:#505050">资源视图</div>
<div class="abs pt" style="left:7px;top:734px;color:#333">输出</div>
<div class="abs" style="left:7px;top:753px;width:23px;height:7px;background:#cccedb"></div>
</div>
<div id="edc">
<div class="abs" style="left:343px;top:68.6px;width:95.5px;height:20px;background:#0e70c0"></div>
<div class="abs" style="left:347px;top:70px;line-height:18px;font-size:12.5px;font-weight:bold;color:#fff;white-space:nowrap"><span style="letter-spacing: -0.201px;">plugin.h</span></div>
<svg class="abs" style="left:404.7px;top:75.5px" width="10" height="8" viewBox="0 0 10 8"><path d="M0.8 4 H4 M4 1.6 V6.4 M4 2.4 H8.2 V5.6 H4 M4.2 5 H8" fill="none" stroke="#fff" stroke-width="1.1"></path></svg>
<svg class="abs" style="left:423px;top:75px" width="9" height="9" viewBox="0 0 9 9"><path d="M1 1 L8 8 M8 1 L1 8" stroke="#fff" stroke-width="1.3"></path></svg>
<div class="abs" style="left:343px;top:87.5px;width:681.5px;height:2px;background:#0e70c0"></div>
<div class="dd" style="left:997px;top:76px;border-width:4px 3.5px 0 3.5px;border-top-color:#555"></div>
<svg class="abs" style="left:1012.5px;top:72px" width="11" height="11" viewBox="0 0 11 11"><circle cx="5.5" cy="5.5" r="2.6" fill="none" stroke="#666" stroke-width="1.6"></circle><path d="M5.5 0.8 V10.2 M0.8 5.5 H10.2 M2.2 2.2 L8.8 8.8 M8.8 2.2 L2.2 8.8" stroke="#666" stroke-width="1.1"></path><circle cx="5.5" cy="5.5" r="1.3" fill="#eeeef2"></circle></svg>
<div class="abs" style="left:343px;top:89.5px;width:663.5px;height:19.5px;background:#fff;border-bottom:1px solid #d6d7de"></div>
<div class="abs" style="left:562px;top:89.5px;width:3.5px;height:19.5px;background:#cccedb"></div>
<div class="abs" style="left:783px;top:89.5px;width:4px;height:19.5px;background:#cccedb"></div>
<svg class="abs" style="left:346px;top:93.5px" width="14" height="12" viewBox="0 0 14 12"><rect x="1" y="1" width="12" height="10" rx="1" fill="#fff" stroke="#555" stroke-width="1.2"></rect><path d="M4.6 2.4 V6.8 M2.4 4.6 H6.8 M9.3 5.6 V9.6 M7.3 7.6 H11.3" stroke="#a33bbf" stroke-width="1.3"></path></svg>
<div class="abs" style="left:363px;top:90.5px;line-height:18px;font-size:13px;white-space:nowrap;color:#1e1e1e"><span style="letter-spacing: 0.107px;">npHttpUploader6</span></div>
<div class="dd" style="left:552px;top:99px;border-width:3px 2.5px 0 2.5px"></div>
<svg class="abs" style="left:567.5px;top:92.5px" width="16" height="14" viewBox="0 0 16 14"><path d="M3 3.2 L5.4 1.2 L7.8 3.6 L5.4 6 Z M7.8 5.6 L11.4 4.2 L13.4 7 L10 8.6 Z M8.8 10 L11.4 8.6 L13 11.2 L10.4 12.8 Z M7 4.6 L9 5.4 M10.6 8.4 V9.2" fill="#fff7df" stroke="#b88a1a" stroke-width="1.1"></path></svg>
<div class="abs" style="left:585.3px;top:90.5px;line-height:18px;font-size:12.6px;white-space:nowrap;color:#1e1e1e"><span style="letter-spacing: -0.316px;">CPlugin</span></div>
<div class="dd" style="left:774px;top:99px;border-width:3px 2.5px 0 2.5px"></div>
<div class="dd" style="left:997.5px;top:99px;border-width:3px 2.5px 0 2.5px"></div>
<svg class="abs" style="left:1009px;top:92.5px" width="12" height="14" viewBox="0 0 12 14"><path d="M6 1 V13 M1.5 7 H10.5" stroke="#333" stroke-width="1.6"></path><path d="M3.6 3.8 L6 1 L8.4 3.8 Z M3.6 10.2 L6 13 L8.4 10.2 Z" fill="#333"></path></svg>
<div class="abs" style="left:343px;top:109.5px;width:16px;height:600.8px;background:#e6e7e8"></div>
<div class="abs" style="left:359px;top:109.5px;width:647px;height:600.8px;background:#cdeccb"></div>
<div class="abs" style="left:1006px;top:109.5px;width:18.8px;height:600.8px;background:#f5f5f5;border-right:1px solid #dcdce6"></div>
<svg class="abs" style="left:1011px;top:116px" width="8" height="6" viewBox="0 0 8 6"><path d="M0.5 5.5 H7.5 L4 0.8 Z" fill="#868999"></path></svg>
<svg class="abs" style="left:1011px;top:699px" width="8" height="6" viewBox="0 0 8 6"><path d="M0.5 0.5 H7.5 L4 5.2 Z" fill="#868999"></path></svg>
<div class="abs" style="left:1010px;top:127px;width:10.5px;height:110.5px;background:#c2c3c9"></div>
<div class="abs" style="left:1006px;top:136.8px;width:18.5px;height:1.8px;background:#0000cd"></div>
<div class="abs" style="left:427px;top:248.72px;width:578.3px;height:15.4px;background:#d5edd3;border:2px solid #e2ebe0;border-left:none"></div>
<svg class="abs" style="left:416.8px;top:160.14px" width="9" height="9" viewBox="0 0 9 9"><rect x="0.5" y="0.5" width="8" height="8" fill="#f1f7ef" stroke="#b2b5b2" stroke-width="1"></rect><path d="M2.3 4.5 H6.7" stroke="#333" stroke-width="1"></path><path d="M4.5 2.3 V6.7" stroke="#333" stroke-width="1"></path></svg>
<svg class="abs" style="left:416.8px;top:237.04px" width="9" height="9" viewBox="0 0 9 9"><rect x="0.5" y="0.5" width="8" height="8" fill="#f1f7ef" stroke="#b2b5b2" stroke-width="1"></rect><path d="M2.3 4.5 H6.7" stroke="#333" stroke-width="1"></path><path d="M4.5 2.3 V6.7" stroke="#333" stroke-width="1"></path></svg>
<svg class="abs" style="left:416.8px;top:252.42px" width="9" height="9" viewBox="0 0 9 9"><rect x="0.5" y="0.5" width="8" height="8" fill="#f1f7ef" stroke="#b2b5b2" stroke-width="1"></rect><path d="M2.3 4.5 H6.7" stroke="#333" stroke-width="1"></path></svg>
<div class="abs" style="left:420.8px;top:261.42px;width:1px;height:449.58px;background:#a5a5a5"></div>
<div class="abs guide" style="left:429.6px;top:264.1px;height:384.52px"></div>
<div class="abs guide" style="left:429.6px;top:663.98px;height:47.02px"></div>
<div class="abs cbox" style="left:427.5px;top:156.14px;width:88px;height:16.5px"></div>
<div class="abs cbox" style="left:427.5px;top:233.04px;width:69.5px;height:16.5px"></div>
<div class="abs code" style="left:339px;top:112.31px;width:61.83px;text-align:right;color:#2b91af;transform:scaleX(0.8200);transform-origin:0 0">1
2
3
4
8
9
10
11
12
15
16
17
18
19
20
21
22
23
24
25
26
27
28
29
30
31
32
33
34
35
36
37
38
39
40
41
42
43
44</div>
<div class="abs code" style="left:426.5px;top:112.31px;transform:scaleX(0.8200);transform-origin:0 0">
<span style="color:#808080">#pragma once</span>

<span style="color:#808080"> #include ...</span>

<span style="color:#0000ff">class </span><span style="color:#2b91af">HttpUploader</span><span style="color:#1e1e1e">;</span>
<span style="color:#0000ff">class </span><span style="color:#2b91af">MsgQueue</span><span style="color:#1e1e1e">;</span>

<span style="color:#808080"> /* ... */</span>
<span style="color:#0000ff">class </span><span style="color:#2b91af">CPlugin</span>
<span style="color:#1e1e1e">    : </span><span style="color:#0000ff">public </span><span style="color:#1e1e1e">sigslot::</span><span style="color:#2b91af">has_slots</span><span style="color:#1e1e1e">&lt;&gt;</span>
<span style="color:#1e1e1e">{</span>
<span style="color:#0000ff">public</span><span style="color:#1e1e1e">:</span>

<span style="color:#0000ff">public</span><span style="color:#1e1e1e">:</span>
<span style="color:#1e1e1e">  </span><span style="color:#74531f">CPlugin</span><span style="color:#1e1e1e">(</span><span style="color:#2b91af">NPP </span><span style="color:#808080">pNPInstance</span><span style="color:#1e1e1e">);</span>
<span style="color:#1e1e1e">  </span><span style="color:#74531f">~CPlugin</span><span style="color:#1e1e1e">();</span>

<span style="color:#1e1e1e">  </span><span style="color:#0000ff">void </span><span style="color:#74531f">InitNpDisp</span><span style="color:#1e1e1e">();</span>
<span style="color:#1e1e1e">  </span><span style="color:#2b91af">NPBool </span><span style="color:#74531f">init</span><span style="color:#1e1e1e">(</span><span style="color:#2b91af">NPWindow</span><span style="color:#1e1e1e">* </span><span style="color:#808080">pNPWindow</span><span style="color:#1e1e1e">);</span>
<span style="color:#1e1e1e">  </span><span style="color:#0000ff">void </span><span style="color:#74531f">shut</span><span style="color:#1e1e1e">();</span>
<span style="color:#1e1e1e">  </span><span style="color:#2b91af">NPBool </span><span style="color:#74531f">isInitialized</span><span style="color:#1e1e1e">();</span>

<span style="color:#1e1e1e">  </span><span style="color:#2b91af">int16_t </span><span style="color:#74531f">handleEvent</span><span style="color:#1e1e1e">(</span><span style="color:#0000ff">void</span><span style="color:#1e1e1e">* </span><span style="color:#808080">event</span><span style="color:#1e1e1e">);</span>

<span style="color:#1e1e1e">  </span><span style="color:#0000ff">void </span><span style="color:#74531f">showVersion</span><span style="color:#1e1e1e">();</span>
<span style="color:#1e1e1e">  </span><span style="color:#0000ff">void </span><span style="color:#74531f">clear</span><span style="color:#1e1e1e">();</span>
<span style="color:#1e1e1e">  </span><span style="color:#0000ff">void </span><span style="color:#74531f">getVersion</span><span style="color:#1e1e1e">(</span><span style="color:#0000ff">char</span><span style="color:#1e1e1e">* *</span><span style="color:#808080">aVersion</span><span style="color:#1e1e1e">);</span>
<span style="color:#1e1e1e">  </span><span style="color:#0000ff">void </span><span style="color:#74531f">GetVersion</span><span style="color:#1e1e1e">(</span><span style="color:#0000ff">const </span><span style="color:#2b91af">NPVariant</span><span style="color:#1e1e1e">* </span><span style="color:#808080">args</span><span style="color:#1e1e1e">,</span><span style="color:#2b91af">NPVariant</span><span style="color:#1e1e1e">* </span><span style="color:#808080">ret</span><span style="color:#1e1e1e">);</span>
<span style="color:#1e1e1e">  </span><span style="color:#2b91af">NPObject </span><span style="color:#1e1e1e">*</span><span style="color:#74531f">GetScriptableObject</span><span style="color:#1e1e1e">();</span>

<span style="color:#1e1e1e">  </span><span style="color:#008000">//</span>
<span style="color:#1e1e1e">  </span><span style="color:#0000ff">void </span><span style="color:#74531f">setRecvMessage</span><span style="color:#1e1e1e">( </span><span style="color:#0000ff">const </span><span style="color:#2b91af">NPVariant</span><span style="color:#1e1e1e">* </span><span style="color:#808080">args</span><span style="color:#1e1e1e"> , </span><span style="color:#2b91af">NPVariant</span><span style="color:#1e1e1e">* </span><span style="color:#808080">ret</span><span style="color:#1e1e1e"> );</span>
<span style="color:#1e1e1e">  </span><span style="color:#0000ff">void </span><span style="color:#74531f">postMessage</span><span style="color:#1e1e1e">( </span><span style="color:#0000ff">const </span><span style="color:#2b91af">NPVariant</span><span style="color:#1e1e1e">* </span><span style="color:#808080">args</span><span style="color:#1e1e1e"> , </span><span style="color:#2b91af">NPVariant</span><span style="color:#1e1e1e">* </span><span style="color:#808080">ret</span><span style="color:#1e1e1e"> );</span>

<span style="color:#0000ff">public</span><span style="color:#1e1e1e">:</span>
<span style="color:#1e1e1e">    </span><span style="color:#0000ff">void </span><span style="color:#74531f">fireEventsAsync</span><span style="color:#1e1e1e">();</span>
<span style="color:#1e1e1e">    </span><span style="color:#0000ff">void </span><span style="color:#74531f">sendMsgItem</span><span style="color:#1e1e1e">(</span><span style="color:#0000ff">const </span><span style="color:#1e1e1e">std::</span><span style="color:#2b91af">shared_ptr</span><span style="color:#1e1e1e">&lt;</span><span style="color:#2b91af">string</span><span style="color:#1e1e1e">&gt; </span><span style="color:#808080">json</span><span style="color:#1e1e1e">);</span>
<span style="color:#1e1e1e">    </span><span style="color:#0000ff">void </span><span style="color:#74531f">sendAllMsg</span><span style="color:#1e1e1e">();</span></div>
<div class="abs" style="left:342.3px;top:109.5px;width:1px;height:619.5px;background:#d3d4df"></div>
<div class="abs" style="left:343px;top:710.3px;width:681.5px;height:19.2px;background:#eeeef2"></div>
<div class="abs" style="left:343px;top:712px;width:57px;height:16.5px;background:#fff;border:1px solid #d3d4df"></div>
<div class="abs bt" style="left:346.3px;top:711.5px;font-size:11.3px"><span style="letter-spacing: -0.509px;">100 %</span></div>
<div class="dd" style="left:392px;top:719px;border-width:3px 2.5px 0 2.5px"></div>
<svg class="abs" style="left:402px;top:712.5px" width="14" height="15" viewBox="0 0 14 15"><path d="M7.4 1 C11 1 13 3.6 12.8 6.6 C12.6 9.2 10.8 10.2 11 13.8 H5.8 C5.6 12.6 5.4 12 4.2 11.8 C2.8 11.6 3 10.4 3 9.4 L1.2 8.6 L3 6.2 C2.8 3.2 4.6 1 7.4 1 Z" fill="#d4c2ee" stroke="#7f5cc0" stroke-width="1"></path><path d="M6 6.4 C6 3.6 10.4 3.8 10 6.8 C9.8 8.4 8.2 8.2 8.2 10 M7.4 5.8 C8 5 9 5.6 8.6 6.6" fill="none" stroke="#7f5cc0" stroke-width="1"></path></svg>
<svg class="abs" style="left:441.2px;top:714.2px" width="11" height="11" viewBox="0 0 11 11"><circle cx="5.5" cy="5.5" r="5.2" fill="#1f8a2e"></circle><path d="M2.8 5.6 L4.8 7.6 L8.2 3.6" fill="none" stroke="#fff" stroke-width="1.4"></path></svg>
<div class="abs bt" style="left:457.5px;top:711.5px;font-size:11.1px">未找到相关问题</div>
<div class="abs" style="left:609px;top:711.5px;width:224px;height:18px;background:#fff;border:1px solid #bdbec9"></div>
<svg class="abs" style="left:618px;top:714px" width="8" height="13" viewBox="0 0 8 13"><path d="M6.5 1 L1.5 6.5 L6.5 12" fill="none" stroke="#333" stroke-width="1.2"></path></svg>
<div class="abs bt" style="left:628px;top:711.5px;font-size:11.6px;font-family:'Liberation Mono','Noto Sans CJK SC',monospace;color:#3c3c3c"><span style="letter-spacing: -0.556px;">xf1，192 天前 | 1 名作者，1 项更改</span></div>
<div class="abs bt" style="left:855.5px;top:711.5px;font-size:11.1px"><span>行<span class="l" style="letter-spacing: -0.32px;">: 15</span></span></div>
<div class="abs bt" style="left:900.5px;top:711.5px;font-size:11.1px"><span>字符<span class="l" style="letter-spacing: -0.219px;">: 15</span></span></div>
<div class="abs bt" style="left:959px;top:711.5px;font-size:11.1px"><span style="letter-spacing: -0.352px;">混合</span></div>
<div class="abs bt" style="left:999.5px;top:711.5px;font-size:10.2px"><span style="letter-spacing: -0.402px;">CRLF</span></div>
</div>
<div id="right">
<div class="abs" style="left:1048.8px;top:68.4px;width:5.5px;height:22.6px;background:#cccedb"></div>
<div class="abs vt" style="left:1028px;top:68.4px;height:22.6px">属性</div>
<div class="abs" style="left:1048.8px;top:103.3px;width:5.5px;height:34px;background:#cccedb"></div>
<div class="abs vt" style="left:1028px;top:103.3px;height:34px">工具箱</div>
<div class="abs" style="left:1048.8px;top:149px;width:5.5px;height:23px;background:#cccedb"></div>
<div class="abs vt" style="left:1028px;top:149px;height:23px">通知</div>
</div>
<div id="status">
<svg class="abs" style="left:5px;top:5.5px" width="16" height="16" viewBox="0 0 16 16"><path d="M1.5 1.5 H14.5 V11 H9 L6.2 14 V11 H1.5 Z" fill="none" stroke="#fff" stroke-width="1.3" stroke-linejoin="round"></path></svg>
<div class="abs st" style="left:27px">就绪</div>
<svg class="abs" style="left:718px;top:6px" width="13" height="14" viewBox="0 0 13 14"><path d="M3.5 13 V2 M1 4.6 L3.5 1.6 L6 4.6 M9.5 1 V12 M7 9.4 L9.5 12.4 L12 9.4" fill="none" stroke="#fff" stroke-width="1.3"></path></svg>
<div class="abs st" style="left:737px"><span style="letter-spacing: 0.313px;">0 / 0</span></div>
<svg class="abs" style="left:767.8px;top:10.5px" width="8" height="5" viewBox="0 0 8 5"><path d="M0.5 4.5 H7.5 L4 0.5 Z" fill="#fff"></path></svg>
<svg class="abs" style="left:798px;top:6.5px" width="13" height="13" viewBox="0 0 13 13"><path d="M2 11 L2.8 8 L9.6 1.6 L11.6 3.6 L5 10.2 Z" fill="none" stroke="#fff" stroke-width="1.2" stroke-linejoin="round"></path></svg>
<div class="abs st" style="left:817.5px">2</div>
<svg class="abs" style="left:845.7px;top:5.5px" width="12" height="15" viewBox="0 0 12 15"><circle cx="3" cy="2.8" r="1.7" fill="none" stroke="#fff" stroke-width="1.1"></circle><circle cx="3" cy="12.2" r="1.7" fill="none" stroke="#fff" stroke-width="1.1"></circle><circle cx="9.2" cy="4.6" r="1.7" fill="none" stroke="#fff" stroke-width="1.1"></circle><path d="M3 4.5 V10.5 M9.2 6.3 C9.2 8.6 3.4 8 3 10.4" fill="none" stroke="#fff" stroke-width="1.1"></path></svg>
<div class="abs st" style="left:867px"><span style="letter-spacing: 0.057px;">dev</span></div>
<svg class="abs" style="left:892.6px;top:10.5px" width="8" height="5" viewBox="0 0 8 5"><path d="M0.5 4.5 H7.5 L4 0.5 Z" fill="#fff"></path></svg>
<svg class="abs" style="left:929px;top:6px" width="14" height="14" viewBox="0 0 14 14"><path d="M7 0.6 L13.4 7 L7 13.4 L0.6 7 Z" fill="#fff"></path><path d="M5 3.4 L7 5.4 V9.6 M7 5.6 L9.2 7.8" fill="none" stroke="#036ec0" stroke-width="1.1"></path><circle cx="7" cy="10" r="1" fill="#036ec0"></circle><circle cx="9.4" cy="8" r="1" fill="#036ec0"></circle></svg>
<div class="abs st" style="left:950.2px"><span style="letter-spacing: 0.302px;">chr</span></div>
<svg class="abs" style="left:972.5px;top:10.5px" width="8" height="5" viewBox="0 0 8 5"><path d="M0.5 4.5 H7.5 L4 0.5 Z" fill="#fff"></path></svg>
<svg class="abs" style="left:999.5px;top:5px" width="13" height="15" viewBox="0 0 13 15"><path d="M2 11 C3.4 9.6 3 7.4 3.4 5.4 C3.8 3 5 1.6 6.5 1.6 C8 1.6 9.2 3 9.6 5.4 C10 7.4 9.6 9.6 11 11 Z" fill="none" stroke="#fff" stroke-width="1.2"></path><path d="M5 12.6 C5.4 13.8 7.6 13.8 8 12.6" fill="none" stroke="#fff" stroke-width="1.1"></path></svg>
<div class="abs" style="left:1009.4px;top:9.3px;width:12px;height:12px;border-radius:50%;background:#e0191c;color:#fff;font-size:8.5px;font-weight:bold;line-height:12px;text-align:center">1</div>
<div class="abs" style="left:1043px;top:11px;width:9px;height:9px;background-image:radial-gradient(circle,#3d8dd2 0.7px,transparent 0.9px);background-size:3px 3px;clip-path:polygon(100% 0,100% 100%,0 100%)"></div>
</div>
<div id="frame"></div>


</body></html>
